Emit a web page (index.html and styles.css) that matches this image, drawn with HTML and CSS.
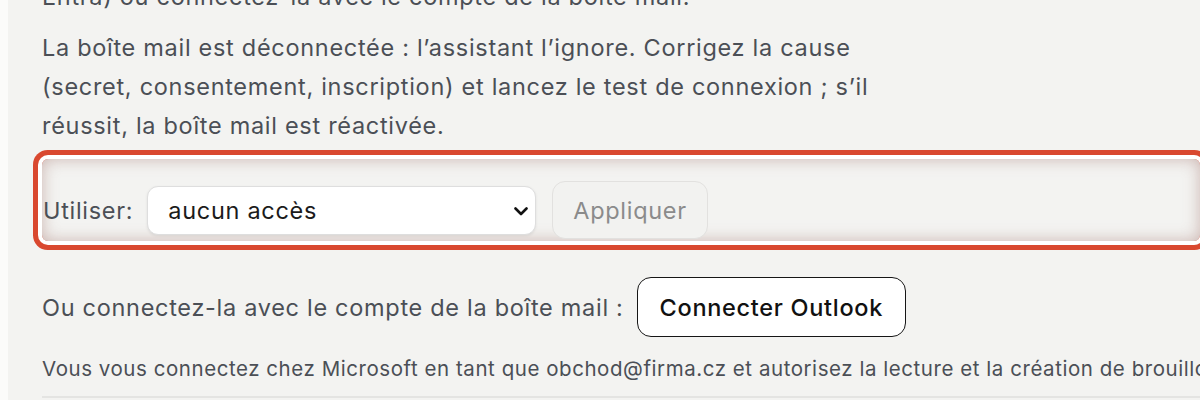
FILE: index.html
```html
<!DOCTYPE html>
<html lang="fr">
<head>
  <meta charset="UTF-8">
  <title>Boîte mail</title>
  <link rel="stylesheet" href="styles.css">
</head>
<body>
  <div class="panel">
    <p class="note">Entra) ou connectez-la avec le compte de la boîte mail.</p>
    <p class="note status">La boîte mail est déconnectée : l’assistant l’ignore. Corrigez la cause (secret, consentement, inscription) et lancez le test de connexion ; s’il réussit, la boîte mail est réactivée.</p>

    <!-- access picker, highlighted -->
    <div class="access-row">
      <label for="access">Utiliser:</label>
      <div class="select-wrap">
        <select id="access">
          <option>aucun accès</option>
        </select>
        <svg class="chevron" width="14" height="9" viewBox="0 0 14 9"><path d="M1.5 1.5 L7 7 L12.5 1.5" fill="none" stroke="#111" stroke-width="2.6" stroke-linecap="round" stroke-linejoin="round"/></svg>
      </div>
      <button class="apply-btn" disabled>Appliquer</button>
    </div>

    <div class="connect-row">
      <span>Ou connectez-la avec le compte de la boîte mail :</span>
      <button class="outlook-btn">Connecter Outlook</button>
    </div>
    <p class="hint">Vous vous connectez chez Microsoft en tant que obchod@firma.cz et autorisez la lecture et la création de brouillons dans cette boîte mail.</p>
    <div class="divider"></div>
  </div>
</body>
</html>
```

FILE: styles.css
```css
body {
  margin: 0;
  background-color: #fbfbfa;
  font-family: Inter, "Noto Sans", sans-serif;
  color: #4b4f56;
  letter-spacing: 0.7px;
  overflow: hidden;
}

.panel {
  margin-left: 8px;
  margin-top: -23px;
  padding: 0 0 0 34px;
  background-color: #f3f3f1;
  min-height: 440px;
  white-space: nowrap;
}

.note {
  margin: 0 0 12px;
  font-size: 23.5px;
  line-height: 39px;
}

.status {
  white-space: normal;
  max-width: 830px;
  margin-bottom: 14px;
}

.access-row {
  display: flex;
  align-items: center;
  gap: 14px;
  padding: 22px 0 2px 1px;
  border-radius: 6px;
  box-shadow: 0 0 0 4px #fff, 0 0 0 9px #d9482f, inset 0 0 16px rgba(140, 80, 70, 0.38);
}

.access-row label {
  font-size: 23.5px;
}

.select-wrap {
  position: relative;
  margin-right: 2px;
}

.select-wrap select {
  appearance: none;
  width: 389px;
  height: 49px;
  padding: 0 40px 0 20px;
  border: 1px solid #dedede;
  border-radius: 11px;
  background-color: #fff;
  box-shadow: 0 1px 3px rgba(0, 0, 0, 0.08);
  font-family: inherit;
  letter-spacing: inherit;
  font-size: 23.5px;
  color: #1b1b1b;
}

.chevron {
  position: absolute;
  right: 8px;
  top: 21px;
}

.apply-btn {
  height: 58px;
  padding: 0 20px;
  border: 1px solid #e2e1df;
  border-radius: 13px;
  background-color: #f2f2f0;
  font-family: inherit;
  letter-spacing: inherit;
  font-size: 23.5px;
  color: #8b8b8b;
}

.connect-row {
  display: flex;
  align-items: center;
  gap: 13px;
  margin-top: 36px;
  font-size: 23.5px;
}

.outlook-btn {
  height: 60px;
  padding: 0 22px;
  border: 1.5px solid #161616;
  border-radius: 14px;
  background-color: #fff;
  font-family: inherit;
  letter-spacing: inherit;
  font-size: 23.5px;
  font-weight: 500;
  color: #111;
}

.hint {
  margin: 17px 0 0;
  font-size: 20.5px;
  letter-spacing: 0.55px;
  line-height: 30px;
}

.divider {
  margin-top: 12px;
  border-top: 2px solid #e4e4e2;
}
```
